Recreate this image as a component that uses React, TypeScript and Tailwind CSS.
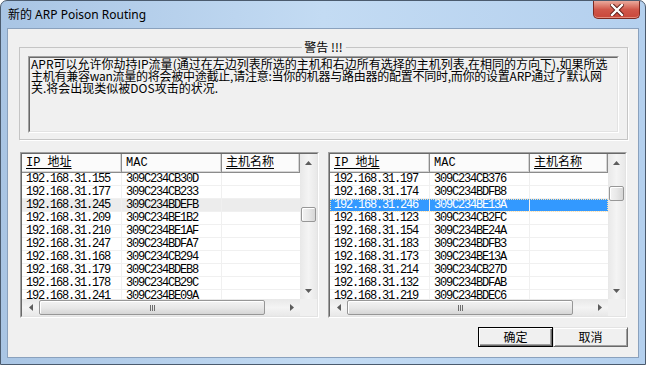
import React from 'react';

type Row = { ip: string; mac: string };

const leftRows: Row[] = [
  { ip: '192.168.31.155', mac: '309C234CB30D' },
  { ip: '192.168.31.177', mac: '309C234CB233' },
  { ip: '192.168.31.245', mac: '309C234BDEFB' },
  { ip: '192.168.31.209', mac: '309C234BE1B2' },
  { ip: '192.168.31.210', mac: '309C234BE1AF' },
  { ip: '192.168.31.247', mac: '309C234BDFA7' },
  { ip: '192.168.31.168', mac: '309C234CB294' },
  { ip: '192.168.31.179', mac: '309C234BDEB8' },
  { ip: '192.168.31.178', mac: '309C234CB29C' },
  { ip: '192.168.31.241', mac: '309C234BE09A' },
];

const rightRows: Row[] = [
  { ip: '192.168.31.197', mac: '309C234CB376' },
  { ip: '192.168.31.174', mac: '309C234BDFB8' },
  { ip: '192.168.31.246', mac: '309C234BE13A' },
  { ip: '192.168.31.123', mac: '309C234CB2FC' },
  { ip: '192.168.31.154', mac: '309C234BE24A' },
  { ip: '192.168.31.183', mac: '309C234BDFB3' },
  { ip: '192.168.31.173', mac: '309C234BE13A' },
  { ip: '192.168.31.214', mac: '309C234CB27D' },
  { ip: '192.168.31.132', mac: '309C234BDFAB' },
  { ip: '192.168.31.219', mac: '309C234BDEC6' },
];

const Arrow = ({ dir }: { dir: 'up' | 'down' | 'left' | 'right' }) => {
  const pts = {
    up: '0,4 7,4 3.5,0',
    down: '0,0 7,0 3.5,4',
    left: '4,0 4,7 0,3.5',
    right: '0,0 0,7 4,3.5',
  }[dir];
  const vertical = dir === 'up' || dir === 'down';
  return (
    <svg width={vertical ? 7 : 4} height={vertical ? 4 : 7}>
      <polygon points={pts} fill="#5d5d5d" />
    </svg>
  );
};

const HeaderCell = ({ label, width, underline }: { label: string; width: string; underline?: boolean }) => (
  <div
    className={`${width} h-[19px] shrink-0 border-r border-b border-[#8c8c8c] bg-[#fbfbfb] pl-[4px] text-[12px] leading-[18px] shadow-[inset_-1px_-1px_0_#d5d5d5]`}
  >
    <span className={underline ? 'underline underline-offset-[2px]' : ''}>{label}</span>
  </div>
);

const ListView = ({
  rows,
  selected,
  active,
  thumbTop,
}: {
  rows: Row[];
  selected: number;
  active: boolean;
  thumbTop: string;
}) => (
  <div className="w-[299px] h-[166px] border border-[#a0a0a0] border-r-white border-b-white">
    <div className="h-full border border-[#696969] border-r-[#e3e3e3] border-b-[#e3e3e3] bg-white flex flex-col">
      <div className="flex h-[145px]">
        {/* table */}
        <div className="w-[278px] overflow-hidden">
          <div className="flex" style={{ fontFamily: '"Liberation Mono", "Noto Sans CJK SC", monospace' }}>
            <HeaderCell label="IP 地址" width="w-[100px]" underline />
            <HeaderCell label="MAC" width="w-[100px]" />
            <HeaderCell label="主机名称" width="w-[78px]" underline />
          </div>
          {rows.map((r, i) => {
            const sel = i === selected;
            const rowCls = sel
              ? active
                ? 'bg-[#3399ff] text-white outline outline-1 outline-dotted outline-[#ffe0a8] -outline-offset-1'
                : 'bg-[#ececec] text-black'
              : 'text-black';
            return (
              <div key={r.ip} className={`flex h-[13px] ${rowCls}`}>
                <div className="w-[100px] shrink-0 border-r border-b border-[#f0f0f0] pl-[4px] text-[12px] leading-[12px] tracking-[-1.2px] whitespace-nowrap font-['Liberation_Mono',monospace]">
                  {r.ip}
                </div>
                <div className="w-[100px] shrink-0 border-r border-b border-[#f0f0f0] pl-[4px] text-[12px] leading-[12px] tracking-[-1.2px] whitespace-nowrap font-['Liberation_Mono',monospace]">
                  {r.mac}
                </div>
                <div className="w-[78px] shrink-0 border-b border-[#f0f0f0]" />
              </div>
            );
          })}
        </div>
        {/* vertical scrollbar */}
        <div className="w-[17px] h-full bg-gradient-to-r from-[#e8e8e8] via-[#f4f4f4] to-[#e8e8e8] flex flex-col items-center">
          <div className="h-[17px] flex items-center justify-center">
            <Arrow dir="up" />
          </div>
          <div className="flex-1 w-full flex flex-col items-center">
            <div
              className={`${thumbTop} w-[15px] h-[15px] rounded-[2px] border border-[#979797] bg-gradient-to-r from-[#f3f3f3] via-[#e8e8e8] to-[#d6d6d6] shadow-[inset_1px_1px_0_#fff]`}
            />
          </div>
          <div className="h-[17px] flex items-center justify-center">
            <Arrow dir="down" />
          </div>
        </div>
      </div>
      {/* horizontal scrollbar */}
      <div className="flex h-[17px]">
        <div className="w-[278px] h-full bg-gradient-to-b from-[#e8e8e8] via-[#f4f4f4] to-[#e8e8e8] flex items-center">
          <div className="w-[17px] h-full flex items-center justify-center">
            <Arrow dir="left" />
          </div>
          <div className="flex-1 h-full flex items-center">
            <div className="w-[226px] h-[15px] rounded-[2px] border border-[#979797] bg-gradient-to-b from-[#f3f3f3] via-[#e8e8e8] to-[#d6d6d6] shadow-[inset_1px_1px_0_#fff] flex items-center justify-center gap-[1px]">
              <div className="w-[1px] h-[6px] bg-[#6d6d6d]" />
              <div className="w-[1px] h-[6px] bg-[#6d6d6d]" />
              <div className="w-[1px] h-[6px] bg-[#6d6d6d]" />
            </div>
          </div>
          <div className="w-[17px] h-full flex items-center justify-center">
            <Arrow dir="right" />
          </div>
        </div>
        <div className="w-[17px] h-full bg-[#f0f0f0]" />
      </div>
    </div>
  </div>
);

const CloseIcon = () => (
  <svg width="14" height="12" viewBox="0 0 14 12">
    <path d="M2 1 L12 11 M12 1 L2 11" stroke="#5a1a14" strokeWidth="4.2" strokeLinecap="square" />
    <path d="M2 1 L12 11 M12 1 L2 11" stroke="#ffffff" strokeWidth="2.4" strokeLinecap="square" />
  </svg>
);

export default function App() {
  const cjk = { fontFamily: '"Noto Sans CJK SC", "Noto Sans", sans-serif' };
  return (
    <div className="w-[646px] h-[365px] overflow-hidden rounded-t-[7px] border border-[#4b5b6e] bg-gradient-to-r from-[#a9c5e4] via-[#c3dbf3] to-[#b4d0ee] flex flex-col">
      {/* Title bar */}
      <div className="h-[27px] flex justify-between items-start">
        <div className="pl-[7px] pt-[6px] text-[12px] leading-[15px] text-black" style={{ fontFamily: '"Noto Sans", "Noto Sans CJK SC", sans-serif' }}>
          新的 ARP Poison Routing
        </div>
        <div className="mr-[5px] w-[47px] h-[18px] rounded-b-[5px] border border-t-0 border-[#7d2a22] bg-gradient-to-b from-[#e9a99c] via-[#d0574a] to-[#c9473a] shadow-[inset_0_-1px_0_#e58c7c] flex items-center justify-center">
          <CloseIcon />
        </div>
      </div>

      {/* Client area */}
      <div className="mx-[6px] h-[330px] border border-[#8aa1bd] bg-[#f0f0f0] pl-[11px] pr-[10px] pt-[18px] flex flex-col" style={cjk}>
        {/* Warning group */}
        <div className="relative h-[93px] border border-[#c5c5c5] shadow-[1px_1px_0_#fff]">
          <div className="absolute left-1/2 -translate-x-1/2 -top-[8px] bg-[#f0f0f0] px-[3px] text-[12px] leading-[14px] whitespace-nowrap">
            警告 !!!
          </div>
          <div className="mx-[8px] mt-[8px] h-[77px] border border-[#a0a0a0] border-r-white border-b-white">
            <div className="h-full border border-[#696969] border-r-[#e3e3e3] border-b-[#e3e3e3] bg-[#f0f0f0] pl-[1px] text-[12px] leading-[12px] text-black overflow-hidden">
              <div className="h-[12px] whitespace-nowrap">APR可以允许你劫持IP流量(通过在左边列表所选的主机和右边所有选择的主机列表,在相同的方向下),如果所选</div>
              <div className="h-[12px] whitespace-nowrap tracking-[-0.25px]">主机有兼容wan流量的将会被中途截止,请注意:当你的机器与路由器的配置不同时,而你的设置ARP通过了默认网</div>
              <div className="h-[12px] whitespace-nowrap">关.将会出现类似被DOS攻击的状况.</div>
            </div>
          </div>
        </div>

        {/* Lists */}
        <div className="mt-[12px] ml-[1px] flex gap-[9px]">
          <ListView rows={leftRows} selected={2} active={false} thumbTop="mt-[36px]" />
          <ListView rows={rightRows} selected={2} active thumbTop="mt-[15px]" />
        </div>

        {/* Buttons */}
        <div className="mt-[9px] flex justify-end">
          <button className="w-[75px] h-[20px] border border-black bg-[#f0f0f0] text-[12px] leading-[16px] shadow-[inset_1px_1px_0_#fff,inset_-1px_-1px_0_#696969,inset_-2px_-2px_0_#a0a0a0]">
            确定
          </button>
          <button className="w-[75px] h-[20px] border border-[#e3e3e3] border-r-[#696969] border-b-[#696969] bg-[#f0f0f0] text-[12px] leading-[16px] shadow-[inset_1px_1px_0_#fff,inset_-1px_-1px_0_#a0a0a0]">
            取消
          </button>
        </div>
      </div>
    </div>
  );
}
